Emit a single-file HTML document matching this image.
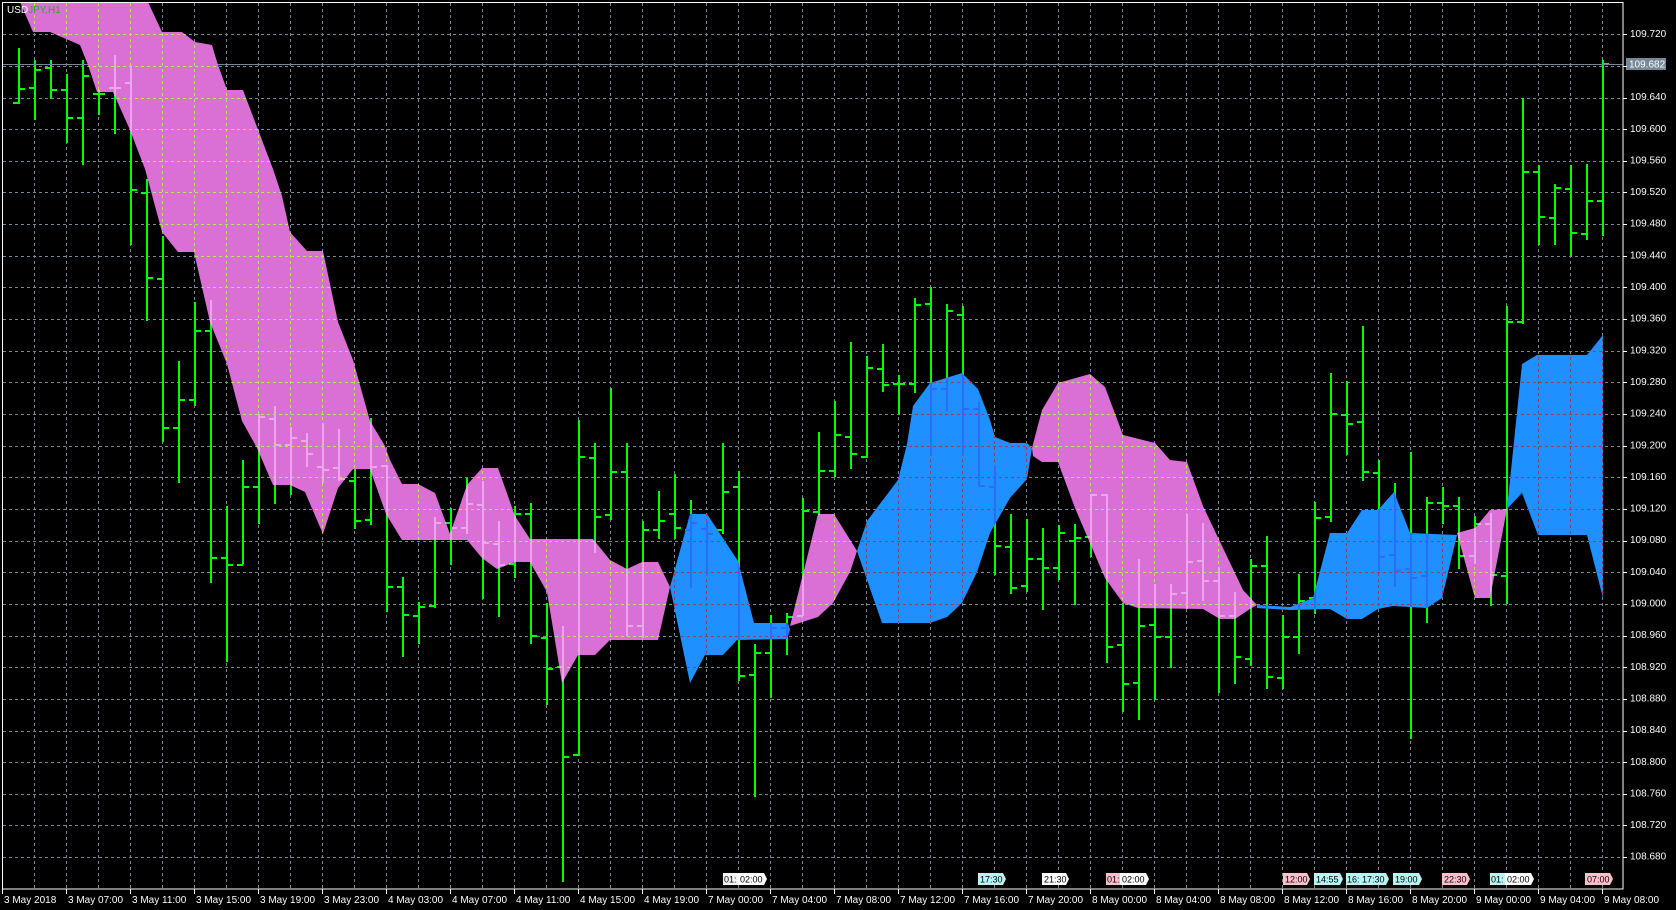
<!DOCTYPE html>
<html><head><meta charset="utf-8"><style>
html,body{margin:0;padding:0;background:#000;width:1676px;height:910px;overflow:hidden}
svg{display:block}
text{font-family:"Liberation Sans",sans-serif}
</style></head><body>
<svg id="s" width="1676" height="910" viewBox="0 0 1676 910" xmlns="http://www.w3.org/2000/svg">
<defs>
<path id="pinkP" d="M20,2 L148,2 L162,32 L182,32 L195,42 L212,45 L217,62 L227,90 L243,90 L257,127 L273,169 L282,196 L290,232 L307,251 L323,251 L338,322 L353,360 L370,421 L385,446 L390,460 L402,484 L418,484 L435,493 L450,534 L467,485 L482,468 L498,468 L515,516 L530,539 L593,539 L610,560 L627,569 L642,562 L658,562 L670,587 L658,640 L610,640 L595,655 L578,655 L562,683 L547,592 L530,562 L515,562 L497,569 L482,558 L467,540 L402,540 L386,514 L370,469 L353,469 L338,488 L323,534 L305,492 L290,485 L273,485 L257,448 L242,421 L227,364 L210,322 L194,252 L178,252 L162,232 L145,169 L130,130 L113,92 L97,92 L88,65 L80,45 L50,32 L33,32 Z M790,626 L818,514 L834,514 L857,551 L850,572 L833,603 L818,617 Z M1032,448 L1042,410 L1058,383 L1090,374 L1105,387 L1123,435 L1155,443 L1170,460 L1187,462 L1203,506 L1223,548 L1243,590 L1257,605 L1250,609 L1235,619 L1220,619 L1203,609 L1138,608 L1123,603 L1105,578 L1075,508 L1058,462 L1042,462 L1033,456 Z M1457,533 L1475,528 L1490,510 L1507,509 L1490,598 L1475,598 Z"/>
<path id="blueP" d="M670,587 L690,514 L707,514 L738,561 L754,623 L788,623 L790,630 L787,639 L737,640 L723,655 L705,655 L690,683 Z M857,551 L867,521 L898,480 L907,444 L913,406 L930,383 L962,373 L978,389 L990,420 L995,437 L1010,443 L1027,443 L1032,448 L1027,479 L1010,498 L990,533 L977,572 L962,603 L947,617 L930,623 L882,623 Z M1257,605 L1290,607 L1313,598 L1330,533 L1347,533 L1362,510 L1378,510 L1394,492 L1410,533 L1457,535 L1442,598 L1427,608 L1393,606 L1378,609 L1362,619 L1347,619 L1330,609 L1290,610 L1257,608 Z M1507,509 L1522,364 L1537,355 L1587,355 L1603,335 L1603,598 L1587,535 L1538,535 L1522,493 Z"/>
<clipPath id="cpP"><use href="#pinkP"/></clipPath>
<clipPath id="cpB"><use href="#blueP"/></clipPath>
<g id="grid" fill="none" stroke-dasharray="3,3" stroke-width="1"></g>
<path id="bars" fill="none" stroke-width="2" d=""/>
</defs>
<use href="#grid" stroke="#778899"/>
<use href="#bars" stroke="#00ff00"/>
<line x1="3" y1="64.5" x2="1623" y2="64.5" stroke="#778899" stroke-width="1"/>
<use href="#pinkP" fill="#da70d6"/>
<use href="#blueP" fill="#1e90ff"/>
<g clip-path="url(#cpP)"><use href="#grid" stroke="#b4ee3a"/><use href="#bars" stroke="#eaa8ea"/></g>
<g clip-path="url(#cpB)"><use href="#grid" stroke="#b0306a"/><use href="#bars" stroke="#2a6cff"/></g>
<rect x="2.5" y="2.5" width="1620.5" height="886.5" fill="none" stroke="#fff" stroke-width="1"/>
<text x="7" y="13" font-size="10" fill="#fff">USD<tspan fill="#3c9a3c">JPY,H1</tspan></text>
<g id="pt" font-size="10" fill="#fff" dominant-baseline="middle">
<text x="1630" y="34.2">109.720</text>
<text x="1630" y="97.5">109.640</text>
<text x="1630" y="129.2">109.600</text>
<text x="1630" y="160.8">109.560</text>
<text x="1630" y="192.5">109.520</text>
<text x="1630" y="224.1">109.480</text>
<text x="1630" y="255.8">109.440</text>
<text x="1630" y="287.4">109.400</text>
<text x="1630" y="319.1">109.360</text>
<text x="1630" y="350.7">109.320</text>
<text x="1630" y="382.4">109.280</text>
<text x="1630" y="414.0">109.240</text>
<text x="1630" y="445.7">109.200</text>
<text x="1630" y="477.3">109.160</text>
<text x="1630" y="509.0">109.120</text>
<text x="1630" y="540.6">109.080</text>
<text x="1630" y="572.3">109.040</text>
<text x="1630" y="603.9">109.000</text>
<text x="1630" y="635.6">108.960</text>
<text x="1630" y="667.2">108.920</text>
<text x="1630" y="698.9">108.880</text>
<text x="1630" y="730.5">108.840</text>
<text x="1630" y="762.2">108.800</text>
<text x="1630" y="793.8">108.760</text>
<text x="1630" y="825.5">108.720</text>
<text x="1630" y="857.1">108.680</text>
</g>
<rect x="1626" y="58" width="40" height="12" fill="#778899"/>
<text x="1629" y="67.5" font-size="10" fill="#fff">109.682</text>
<g font-size="10" fill="#fff">
<text x="4" y="903">3 May 2018</text>
<text x="68" y="903">3 May 07:00</text>
<text x="132" y="903">3 May 11:00</text>
<text x="196" y="903">3 May 15:00</text>
<text x="260" y="903">3 May 19:00</text>
<text x="324" y="903">3 May 23:00</text>
<text x="388" y="903">4 May 03:00</text>
<text x="452" y="903">4 May 07:00</text>
<text x="516" y="903">4 May 11:00</text>
<text x="580" y="903">4 May 15:00</text>
<text x="644" y="903">4 May 19:00</text>
<text x="708" y="903">7 May 00:00</text>
<text x="772" y="903">7 May 04:00</text>
<text x="836" y="903">7 May 08:00</text>
<text x="900" y="903">7 May 12:00</text>
<text x="964" y="903">7 May 16:00</text>
<text x="1028" y="903">7 May 20:00</text>
<text x="1092" y="903">8 May 00:00</text>
<text x="1156" y="903">8 May 04:00</text>
<text x="1220" y="903">8 May 08:00</text>
<text x="1284" y="903">8 May 12:00</text>
<text x="1348" y="903">8 May 16:00</text>
<text x="1412" y="903">8 May 20:00</text>
<text x="1476" y="903">9 May 00:00</text>
<text x="1540" y="903">9 May 04:00</text>
<text x="1604" y="903">9 May 08:00</text>
</g>
<g id="ev" font-size="9" fill="#000"></g>
<g font-size="9" fill="#000">
<path d="M723,873 h15 v12 h-15Z" fill="#f4f4f4"/><text x="724" y="882.5">01:</text>
<path d="M738,873 h26 l3,6 l-3,6 h-26Z" fill="#ffffff"/><text x="740" y="882.5">02:00</text>
<path d="M978,873 h25 l3,6 l-3,6 h-25Z" fill="#b8f4f4"/><text x="980" y="882.5">17:30</text>
<path d="M1042,873 h24 l3,6 l-3,6 h-24Z" fill="#ffffff"/><text x="1044" y="882.5">21:30</text>
<path d="M1106,873 h14 v12 h-14Z" fill="#ffc0cb"/><text x="1107" y="882.5">01:</text>
<path d="M1120,873 h26 l3,6 l-3,6 h-26Z" fill="#ffffff"/><text x="1122" y="882.5">02:00</text>
<path d="M1283,873 h24 l3,6 l-3,6 h-24Z" fill="#ffc0cb"/><text x="1285" y="882.5">12:00</text>
<path d="M1314,873 h26 l3,6 l-3,6 h-26Z" fill="#b8f4f4"/><text x="1316" y="882.5">14:55</text>
<path d="M1346,873 h14 v12 h-14Z" fill="#b8f4f4"/><text x="1347" y="882.5">16:</text>
<path d="M1360,873 h26 l3,6 l-3,6 h-26Z" fill="#b8f4f4"/><text x="1362" y="882.5">17:30</text>
<path d="M1393,873 h26 l3,6 l-3,6 h-26Z" fill="#b8f4f4"/><text x="1395" y="882.5">19:00</text>
<path d="M1442,873 h25 l3,6 l-3,6 h-25Z" fill="#ffc0cb"/><text x="1444" y="882.5">22:30</text>
<path d="M1490,873 h15 v12 h-15Z" fill="#b8f4f4"/><text x="1491" y="882.5">01:</text>
<path d="M1505,873 h26 l3,6 l-3,6 h-26Z" fill="#ffffff"/><text x="1507" y="882.5">02:00</text>
<path d="M1585,873 h25 l3,6 l-3,6 h-25Z" fill="#ffc0cb"/><text x="1587" y="882.5">07:00</text>
</g>
<g id="ticks" stroke="#fff" stroke-width="1"></g>
</svg>
<script>
var NS="http://www.w3.org/2000/svg";
var g=document.getElementById("grid"),t=document.getElementById("ticks");
function ln(p,x1,y1,x2,y2){var l=document.createElementNS(NS,"line");l.setAttribute("x1",x1);l.setAttribute("y1",y1);l.setAttribute("x2",x2);l.setAttribute("y2",y2);p.appendChild(l);}
for(var n=0;n<27;n++){var y=Math.round(34.2+31.65*n)+0.5;ln(g,3,y,1622,y);ln(t,1623,y,1627,y);}
for(var k=0;k<50;k++){var x=34+32*k+0.5;ln(g,x,3,x,888);}
for(var k=0;k<26;k++){var x=2+64*k+0.5;ln(t,x,889,x,894);}
var B=[[48,104,103,89],[60,120,88,70],[60,99,68,90],[74,143,90,118],[60,165,118,76],[90,115,94,94],[55,134,88,88],[65,245,83,190],
[179,321,193,278],[236,442,279,428],[361,483,428,400],[302,406,400,331],[300,583,331,558],[506,662,558,565],[460,564,565,487],[414,524,487,417],
[406,504,419,445],[427,495,445,438],[433,467,441,454],[423,483,467,470],[429,481,468,479],[469,529,481,521],[418,525,520,467],[465,612,466,587],
[577,657,587,615],[602,644,616,607],[517,608,606,523],[508,565,523,528],[478,534,528,504],[481,599,505,543],[521,617,544,565],[506,578,564,514],
[503,644,514,636],[603,705,638,669],[626,882,667,757],[420,756,755,457],[443,553,458,517],[388,520,515,472],[443,636,472,626],[521,638,626,530],
[491,539,530,521],[474,539,514,528],[500,588,530,523],[521,575,529,534],[443,534,530,492],[471,681,487,676],[644,797,675,653],[615,698,653,628],
[613,655,628,617],[498,616,616,511],[432,515,512,471],[401,477,471,435],[342,469,437,454],[356,458,457,368],[344,392,369,385],[375,414,384,384],
[298,393,384,305],[287,456,304,389],[304,411,389,311],[306,455,315,409],[402,486,409,486],[466,575,487,546],[514,594,547,588],[519,592,586,559],
[528,610,559,568],[525,580,568,533],[524,605,541,538],[494,557,537,495],[494,663,495,647],[603,712,645,684],[559,720,683,626],[584,700,625,637],
[584,668,637,594],[514,609,593,562],[523,601,561,581],[567,693,581,616],[592,684,616,657],[559,666,659,566],[536,689,566,677],[615,689,678,637],
[574,654,637,601],[502,614,598,518],[373,522,517,414],[381,455,415,424],[326,481,422,472],[460,571,473,557],[483,587,555,571],[452,739,569,578],
[497,623,576,503],[487,524,503,506],[497,569,506,556],[516,564,556,524],[513,606,524,575],[306,604,576,322],[98,324,322,172],[165,245,172,217],
[184,245,218,188],[165,256,189,233],[164,240,234,201],[60,236,201,64]];
var d="";
for(var i=0;i<B.length;i++){var x=18+16*i+1,b=B[i];d+="M"+x+","+b[0]+"V"+b[1]+"M"+(x-6)+","+b[2]+"H"+x+"M"+x+","+b[3]+"H"+(x+6);}
document.getElementById("bars").setAttribute("d",d);
</script>
</body></html>
